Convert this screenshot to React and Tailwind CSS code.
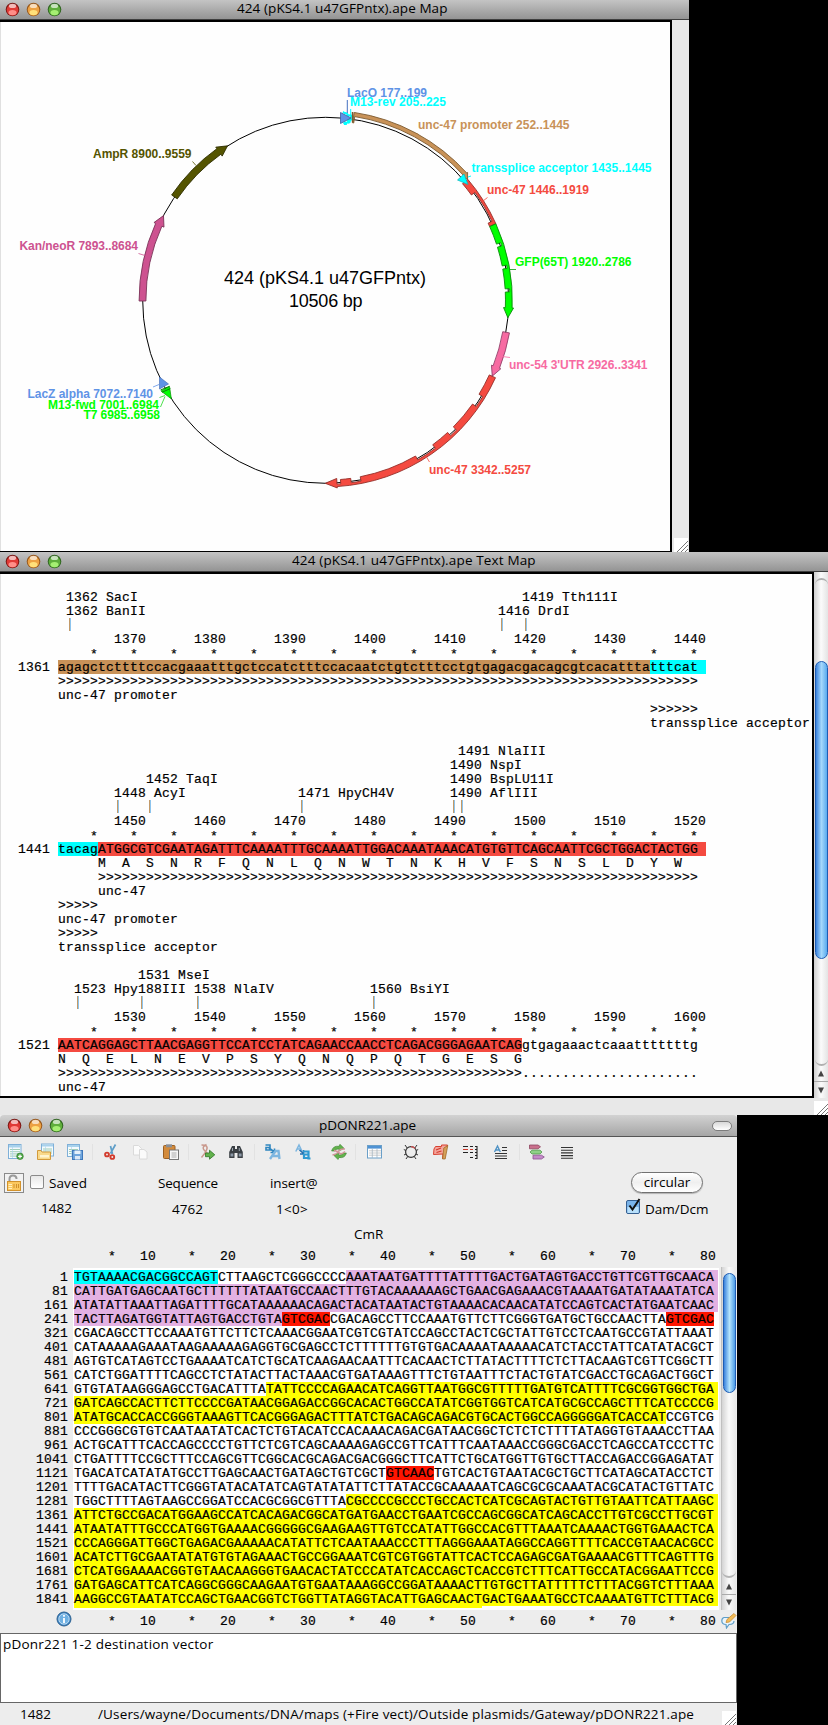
import React from "react";

const MONO = "font-['Liberation_Mono',monospace] text-[13px] leading-[16px] tracking-[0.199px] whitespace-pre [-webkit-text-stroke:0.2px]";

/* ---------- window chrome ---------- */

function Light({ dark, base, glow }) {
  return (
    <svg width="15" height="15" viewBox="0 0 15 15">
      <circle cx="7.5" cy="7.5" r="6.8" fill={dark} />
      <circle cx="7.5" cy="7.8" r="5.8" fill={base} />
      <ellipse cx="7.5" cy="10.6" rx="4" ry="2.6" fill={glow} />
      <ellipse cx="7.5" cy="3.9" rx="3.6" ry="2.2" fill="#fff" opacity="0.65" />
    </svg>
  );
}

function Lights() {
  return (
    <div className="flex gap-[6px] pb-px">
      <Light dark="#7a1714" base="#e03a36" glow="#ff8e88" />
      <Light dark="#96561a" base="#eda244" glow="#ffe07a" />
      <Light dark="#2f6420" base="#5fae3c" glow="#a5ef72" />
    </div>
  );
}

function Grip() {
  return (
    <svg width="14" height="14" viewBox="0 0 14 14" className="bg-white">
      <path d="M3 14 L14 3 M7 14 L14 7 M11 14 L14 11" stroke="#777" strokeWidth="1" fill="none" />
    </svg>
  );
}

function Arrow({ up }) {
  return (
    <svg width="8" height="7" viewBox="0 0 8 7">
      <path d={up ? "M4 0.5 L7 6.5 H1 Z" : "M1 0.5 H7 L4 6.5 Z"} fill="#444" />
    </svg>
  );
}

/* ---------- circular map ---------- */

const CX = 325.7;
const CY = 300.3;
const R = 183;
const TOTAL = 10506;

function pt(pos, r) {
  const a = (pos / TOTAL) * Math.PI * 2;
  return [CX + r * Math.sin(a), CY - r * Math.cos(a)];
}
const f = (p) => p[0].toFixed(2) + " " + p[1].toFixed(2);

// Closed band made of [start, end, innerRadius] pieces sharing one outer radius, with an optional head.
function band(pieces, outer, head) {
  const start = pieces[0][0];
  const end = pieces[pieces.length - 1][1];
  let d = "M" + f(pt(start, outer)) + " A" + outer + " " + outer + " 0 0 1 " + f(pt(end, outer));
  if (head) {
    d += " L" + f(pt(end, head.out)) + " L" + f(pt(head.tip, head.mid)) + " L" + f(pt(end, head.inn));
  }
  for (let i = pieces.length - 1; i >= 0; i--) {
    const [s, e, r] = pieces[i];
    d += " L" + f(pt(e, r)) + " A" + r + " " + r + " 0 0 0 " + f(pt(s, r));
  }
  return d + " Z";
}

const IN = 179.8;
const OUT = 186.6;
const THIN = 184.2;

const FEATURES = [
  { fill: "#c89258", stroke: "#7d5a30", d: band([[252, 262, 179.5], [262, 1400, 186]], 190, { out: 191, inn: 184, mid: 186.5, tip: 1445 }) },
  { fill: "#f44a40", stroke: "#94302a", d: band([[1446, 1580, IN], [1580, 1885, THIN], [1885, 1919, IN]], OUT) },
  { fill: "#00ff00", stroke: "#0a8a0a", d: band([[1920, 2095, IN], [2095, 2125, THIN], [2125, 2305, IN], [2305, 2335, THIN], [2335, 2520, IN], [2520, 2550, THIN], [2550, 2695, IN]], OUT, { out: 188, inn: 178, mid: 183, tip: 2786 }) },
  { fill: "#f44a40", stroke: "#94302a", d: band([[3342, 3546, IN], [3546, 3655, THIN], [3655, 3933, IN], [3933, 4007, THIN], [4007, 4187, IN], [4187, 4378, THIN], [4378, 4930, IN], [4930, 5020, THIN], [5020, 5116, IN], [5116, 5150, THIN]], OUT, { out: 188, inn: 178.5, mid: 183, tip: 5257 }) },
  { fill: "#f76ba2", stroke: "#93416a", d: band([[2920, 3250, IN]], OUT, { out: 188, inn: 178, mid: 183, tip: 3341 }) },
  { fill: "#cd5290", stroke: "#7b3358", d: band([[7873, 8590, IN]], OUT, { out: 188.5, inn: 177.5, mid: 183, tip: 8684 }) },
  { fill: "#545400", stroke: "#2e2e00", d: band([[8882, 9465, IN]], OUT, { out: 188.5, inn: 177.5, mid: 183, tip: 9559 }) },
];

const LABELS = [
  ["M13-rev 205..225", 350, 106, 96, "#00ffff"],
  ["LacO 177..199", 347, 97, 80, "#5f93e6"],
  ["unc-47 promoter 252..1445", 418, 129, 151.5, "#c89258"],
  ["transsplice acceptor 1435..1445", 471.5, 172, 180, "#00ffff"],
  ["unc-47 1446..1919", 487, 194, 102, "#f44a40"],
  ["GFP(65T) 1920..2786", 515, 266, 116.5, "#00ff00"],
  ["unc-54 3'UTR 2926..3341", 509, 369, 138.5, "#f76ba2"],
  ["unc-47 3342..5257", 429, 474, 102, "#f44a40"],
  ["AmpR 8900..9559", 93, 158, 98.5, "#545400"],
  ["Kan/neoR 7893..8684", 19.5, 250, 118.5, "#cd5290"],
  ["LacZ alpha 7072..7140", 27.5, 398, 125.5, "#5f93e6"],
  ["M13-fwd 7001..6984", 48, 409, 111, "#00ff00"],
  ["T7 6985..6958", 83.5, 419, 76.5, "#00ff00"],
];

function PlasmidMap() {
  return (
    <svg width="669" height="529" viewBox="1 22 669 529" className="block font-['Liberation_Sans',Arial,sans-serif]">
      <circle cx={CX} cy={CY} r={R} fill="none" stroke="#000" strokeWidth="1" />
      {FEATURES.map((x, i) => (
        <path key={i} d={x.d} fill={x.fill} stroke={x.stroke} strokeWidth="0.9" strokeLinejoin="round" />
      ))}
      <path d="M343 112 L352 118 L343 124 L347 124 L352 120 L352 116 Z" fill="#00ffff" stroke="#00ffff" strokeWidth="2" strokeDasharray="3 1.5" />
      <path d="M340.5 112.5 L351 118 L340.5 123.5 Z" fill="#5f93e6" stroke="#3c5f9c" strokeWidth="0.8" />
      <path d="M347.3 100 V113" stroke="#4470c0" fill="none" />
      <path d="M350.7 109 V117" stroke="#00ffff" fill="none" />
      <path d="M352.6 112 V122.5" stroke="#7d5a30" strokeWidth="1.6" />
      <path d="M457.5 180 L464 174 L468 184.5 Z" fill="#00ffff" stroke="#10b0b8" strokeWidth="0.7" />
      <path d="M468 177 L471 176" stroke="#00ffff" />
      <path d="M159.5 377 L168.5 384 L159.5 389 Z" fill="#5f93e6" stroke="#3c66b0" strokeWidth="0.6" />
      <path d="M161 391 L169.5 386.5 L171.3 398.8 Z" fill="#00ff00" stroke="#0a9a0a" strokeWidth="0.8" />
      <path d="M160.5 390 L169.5 386.3 M162 392.3 L170.3 388.6" stroke="#0a800a" strokeWidth="1" />
      <path d="M153 387 L159 384.5" stroke="#5f93e6" strokeWidth="0.8" />
      <path d="M159.5 397.5 L165 395.5 M160.5 407 L165 396.5" stroke="#20d820" strokeWidth="0.8" />
      <path d="M192.5 161.5 L196 165.5" stroke="#545400" strokeWidth="0.8" />
      <path d="M138.5 253.5 L145 255.5" stroke="#cd5290" strokeWidth="0.8" />
      <path d="M487.5 197.5 L483 201" stroke="#f44a40" strokeWidth="0.8" />
      <path d="M510 269.5 H516" stroke="#0a9a0a" strokeWidth="0.8" />
      <path d="M502.5 356.5 L510 357.5" stroke="#f76ba2" strokeWidth="0.8" />
      <path d="M426.5 457 L429.5 462" stroke="#f44a40" strokeWidth="0.8" />
      <path d="M415 136.5 L418 133" stroke="#c89258" strokeWidth="0.8" />
      {LABELS.map(([t, x, y, w, c]) => (
        <text key={t} x={x} y={y} textLength={w} fill={c} fontSize="12" fontWeight="700">{t}</text>
      ))}
      <text x="224" y="284" textLength="202" fontSize="18">424 (pKS4.1 u47GFPntx)</text>
      <text x="289" y="307" textLength="73.5" fontSize="18">10506 bp</text>
    </svg>
  );
}

/* ---------- text map ---------- */

// Lays strings out at character columns.
function place(items) {
  let s = "";
  for (const [col, t] of items) s = s.padEnd(col) + t;
  return s;
}
const ruler = (from) => place([0, 1, 2, 3, 4, 5, 6, 7].map((i) => [14 + i * 10, String(from + i * 10)]));
const STARS = place(Array.from({ length: 16 }, (_, i) => [11 + i * 5, "*"]));
const aminos = (col, s) => " ".repeat(col) + s.split("").join("  ");
const at = (col, t) => place([[col, t]]);

function Line({ children }) {
  return <div className="h-[14px]">{children}</div>;
}
function Stars() {
  return <div className="h-[14px] leading-[18px]">{STARS}</div>;
}
function Ticks({ cols }) {
  const cells = [];
  let c = 0;
  for (const col of cols) {
    cells.push(<span key={"s" + col}>{" ".repeat(col - c)}</span>);
    cells.push(<span key={col} className="mx-[3px] h-[13px] w-[2px] border-l border-r border-l-[#c39a68] border-r-[#8cc4ee]" />);
    c = col + 1;
  }
  return <div className="flex h-[14px]">{cells}</div>;
}
function Hl({ c, children }) {
  return <span className={"inline-block h-[14px] align-top " + c}>{children}</span>;
}

function TextMap() {
  return (
    <div className={MONO + " h-[522px] w-[811px] overflow-hidden bg-[#fefefe] pt-[16px] pl-px text-black"}>
      <Line>{place([[8, "1362 SacI"], [65, "1419 Tth111I"]])}</Line>
      <Line>{place([[8, "1362 BanII"], [62, "1416 DrdI"]])}</Line>
      <Ticks cols={[8, 62, 65]} />
      <Line>{ruler(1370)}</Line>
      <Stars />
      <Line>{"  1361 "}<Hl c="bg-[#c89258]">agagctcttttccacgaaatttgctccatctttccacaatctgtctttcctgtgagacgacagcgtcacattta</Hl><Hl c="bg-[#00ffff]">{"tttcat "}</Hl></Line>
      <Line>{at(7, ">".repeat(80))}</Line>
      <Line>{at(7, "unc-47 promoter")}</Line>
      <Line>{at(81, ">>>>>>")}</Line>
      <Line>{at(81, "transsplice acceptor")}</Line>
      <Line />
      <Line>{at(57, "1491 NlaIII")}</Line>
      <Line>{at(56, "1490 NspI")}</Line>
      <Line>{place([[18, "1452 TaqI"], [56, "1490 BspLU11I"]])}</Line>
      <Line>{place([[14, "1448 AcyI"], [37, "1471 HpyCH4V"], [56, "1490 AflIII"]])}</Line>
      <Ticks cols={[14, 18, 37, 56, 57]} />
      <Line>{ruler(1450)}</Line>
      <Stars />
      <Line>{"  1441 "}<Hl c="bg-[#00ffff]">tacag</Hl><Hl c="bg-[#f44a40]">{"ATGGCGTCGAATAGATTTCAAAATTTGCAAAATTGGACAAATAAACATGTGTTCAGCAATTCGCTGGACTACTGG "}</Hl></Line>
      <Line>{aminos(12, "MASNRFQNLQNWTNKHVFSNSLDYW")}</Line>
      <Line>{at(12, ">".repeat(75))}</Line>
      <Line>{at(12, "unc-47")}</Line>
      <Line>{at(7, ">>>>>")}</Line>
      <Line>{at(7, "unc-47 promoter")}</Line>
      <Line>{at(7, ">>>>>")}</Line>
      <Line>{at(7, "transsplice acceptor")}</Line>
      <Line />
      <Line>{at(17, "1531 MseI")}</Line>
      <Line>{place([[9, "1523 Hpy188III"], [24, "1538 NlaIV"], [46, "1560 BsiYI"]])}</Line>
      <Ticks cols={[9, 17, 24, 46]} />
      <Line>{ruler(1530)}</Line>
      <Stars />
      <Line>{"  1521 "}<Hl c="bg-[#f44a40]">AATCAGGAGCTTAACGAGGTTCCATCCTATCAGAACCAACCTCAGACGGGAGAATCAG</Hl>gtgagaaactcaaatttttttg</Line>
      <Line>{aminos(7, "NQELNEVPSYQNQPQTGESG")}</Line>
      <Line>{at(7, ">".repeat(58) + ".".repeat(22))}</Line>
      <Line>{at(7, "unc-47")}</Line>
    </div>
  );
}

/* ---------- sequence editor ---------- */

const C = "bg-[#00ffff]";
const V = "bg-[#e3b1e3]";
const X = "bg-[#ff1500]";
const Y = "bg-[#ffff00]";
const N = "";

// Each row: the bases, then [length, highlight] runs.
const ROWS = [
  ["TGTAAAACGACGGCCAGTCTTAAGCTCGGGCCCCAAATAATGATTTTATTTTGACTGATAGTGACCTGTTCGTTGCAACA", [18, C], [16, N], [46, V]],
  ["CATTGATGAGCAATGCTTTTTTATAATGCCAACTTTGTACAAAAAAGCTGAACGAGAAACGTAAAATGATATAAATATCA", [80, V]],
  ["ATATATTAAATTAGATTTTGCATAAAAAACAGACTACATAATACTGTAAAACACAACATATCCAGTCACTATGAATCAAC", [80, V]],
  ["TACTTAGATGGTATTAGTGACCTGTAGTCGACCGACAGCCTTCCAAATGTTCTTCGGGTGATGCTGCCAACTTAGTCGAC", [26, V], [6, X], [42, N], [6, X]],
  ["CGACAGCCTTCCAAATGTTCTTCTCAAACGGAATCGTCGTATCCAGCCTACTCGCTATTGTCCTCAATGCCGTATTAAAT", [80, N]],
  ["CATAAAAAGAAATAAGAAAAAGAGGTGCGAGCCTCTTTTTTGTGTGACAAAATAAAAACATCTACCTATTCATATACGCT", [80, N]],
  ["AGTGTCATAGTCCTGAAAATCATCTGCATCAAGAACAATTTCACAACTCTTATACTTTTCTCTTACAAGTCGTTCGGCTT", [80, N]],
  ["CATCTGGATTTTCAGCCTCTATACTTACTAAACGTGATAAAGTTTCTGTAATTTCTACTGTATCGACCTGCAGACTGGCT", [80, N]],
  ["GTGTATAAGGGAGCCTGACATTTATATTCCCCAGAACATCAGGTTAATGGCGTTTTTGATGTCATTTTCGCGGTGGCTGA", [24, N], [56, Y]],
  ["GATCAGCCACTTCTTCCCCGATAACGGAGACCGGCACACTGGCCATATCGGTGGTCATCATGCGCCAGCTTTCATCCCCG", [80, Y]],
  ["ATATGCACCACCGGGTAAAGTTCACGGGAGACTTTATCTGACAGCAGACGTGCACTGGCCAGGGGGATCACCATCCGTCG", [74, Y], [6, N]],
  ["CCCGGGCGTGTCAATAATATCACTCTGTACATCCACAAACAGACGATAACGGCTCTCTCTTTTATAGGTGTAAACCTTAA", [80, N]],
  ["ACTGCATTTCACCAGCCCCTGTTCTCGTCAGCAAAAGAGCCGTTCATTTCAATAAACCGGGCGACCTCAGCCATCCCTTC", [80, N]],
  ["CTGATTTTCCGCTTTCCAGCGTTCGGCACGCAGACGACGGGCTTCATTCTGCATGGTTGTGCTTACCAGACCGGAGATAT", [80, N]],
  ["TGACATCATATATGCCTTGAGCAACTGATAGCTGTCGCTGTCAACTGTCACTGTAATACGCTGCTTCATAGCATACCTCT", [39, N], [6, X], [35, N]],
  ["TTTTGACATACTTCGGGTATACATATCAGTATATATTCTTATACCGCAAAAATCAGCGCGCAAATACGCATACTGTTATC", [80, N]],
  ["TGGCTTTTAGTAAGCCGGATCCACGCGGCGTTTACGCCCCGCCCTGCCACTCATCGCAGTACTGTTGTAATTCATTAAGC", [34, N], [46, Y]],
  ["ATTCTGCCGACATGGAAGCCATCACAGACGGCATGATGAACCTGAATCGCCAGCGGCATCAGCACCTTGTCGCCTTGCGT", [80, Y]],
  ["ATAATATTTGCCCATGGTGAAAACGGGGGCGAAGAAGTTGTCCATATTGGCCACGTTTAAATCAAAACTGGTGAAACTCA", [80, Y]],
  ["CCCAGGGATTGGCTGAGACGAAAAACATATTCTCAATAAACCCTTTAGGGAAATAGGCCAGGTTTTCACCGTAACACGCC", [80, Y]],
  ["ACATCTTGCGAATATATGTGTAGAAACTGCCGGAAATCGTCGTGGTATTCACTCCAGAGCGATGAAAACGTTTCAGTTTG", [80, Y]],
  ["CTCATGGAAAACGGTGTAACAAGGGTGAACACTATCCCATATCACCAGCTCACCGTCTTTCATTGCCATACGGAATTCCG", [80, Y]],
  ["GATGAGCATTCATCAGGCGGGCAAGAATGTGAATAAAGGCCGGATAAAACTTGTGCTTATTTTTCTTTACGGTCTTTAAA", [80, Y]],
  ["AAGGCCGTAATATCCAGCTGAACGGTCTGGTTATAGGTACATTGAGCAACTGACTGAAATGCCTCAAAATGTTCTTTACG", [80, Y]],
];

const RULER = place([1, 2, 3, 4, 5, 6, 7, 8].flatMap((i) => [[i * 10 - 6, "*"], [i * 10 - 2, String(i * 10)]]));

function SeqRow({ row }) {
  const [seq, ...runs] = row;
  let p = 0;
  return (
    <div className="flex h-[14px] w-[644px]">
      {runs.map(([n, c], i) => {
        const s = seq.slice(p, p + n);
        p += n;
        const grow = i === runs.length - 1 && (c === V || c === Y) ? " grow" : "";
        return <span key={i} className={c + grow}>{s}</span>;
      })}
    </div>
  );
}

function Sheet({ x = 0, y = 0, c = "#7fb0d8" }) {
  return (
    <g>
      <rect x={x + 0.5} y={y + 0.5} width="12" height="12" fill="#f4fafd" stroke={c} />
      <rect x={x + 1} y={y + 1} width="11" height="2" fill="#a9d2ec" />
      <path d={`M${x + 2} ${y + 5.5} h9 M${x + 2} ${y + 7.5} h9 M${x + 2} ${y + 9.5} h9`} stroke="#8cc2a4" strokeWidth="0.8" />
      <path d={`M${x + 4.5} ${y + 3} v9`} stroke="#a9d2ec" strokeWidth="0.6" />
    </g>
  );
}

const ICONS = [
  ["ml-[8px]", <g><rect x="0.5" y="0.5" width="12.5" height="14" fill="#f4fafd" stroke="#7fb0d8" /><rect x="1" y="1" width="11.5" height="2.5" fill="#a9d2ec" /><path d="M2 5.5 H12 M2 7.7 H12 M2 9.9 H12 M2 12.1 H12" stroke="#8cc2a4" strokeWidth="0.8" /><path d="M4.5 3 V14" stroke="#a9d2ec" strokeWidth="0.6" /><circle cx="12" cy="12.3" r="3.3" fill="#4fa648" stroke="#2f7c2c" strokeWidth="0.6" /><path d="M12 10.4 V14.2 M10.1 12.3 H13.9" stroke="#fff" strokeWidth="1.2" /></g>],
  ["ml-[13px]", <g><Sheet x={4} y={-0.5} /><path d="M0.5 15.5 V6.5 H4 L5 8 H13.5 V15.5 Z" fill="#f9d98a" stroke="#d29a3c" /><path d="M3 11 H12 V13.5 H3 Z" fill="#fff4cf" /></g>],
  ["ml-[14px]", <g><Sheet /><rect x="5.5" y="6.5" width="10" height="9" fill="#6fa5dc" stroke="#3f78bb" /><rect x="7.5" y="6.5" width="6" height="3.5" fill="#e6f1fb" /><rect x="8" y="12" width="5" height="3.5" fill="#dce9f7" /></g>],
  ["sep", "ml-[9px]", "ml-[10px]"],
  ["", <g fill="none"><path d="M12.5 0.5 L7.5 9.5 M7.5 2 L9.5 10" stroke="#5f9ec8" strokeWidth="1.7" /><circle cx="4" cy="10.5" r="1.9" stroke="#d23a2c" strokeWidth="1.9" /><circle cx="9.3" cy="13" r="1.9" stroke="#d23a2c" strokeWidth="1.9" /></g>],
  ["ml-[14px]", <g fill="#fbfbfb" stroke="#dadada"><path d="M0.5 1.5 H5.5 L8.5 4.5 V11 H0.5 Z" /><path d="M6.5 5.5 H11 L14 8 V15 H6.5 Z" /></g>],
  ["ml-[14px]", <g><rect x="0.5" y="1.5" width="11.5" height="13" rx="1" fill="#d38b3c" stroke="#9a5f22" /><rect x="3" y="0.3" width="6" height="3" fill="#8a8f96" /><rect x="6.5" y="6" width="9" height="9.5" fill="#f6f6f6" stroke="#777" /><path d="M8.5 9 H13.5 M8.5 11 H13.5 M8.5 13 H13.5" stroke="#9a9a9a" strokeWidth="0.8" /></g>],
  ["sep", "ml-[9px]", "ml-[11px]"],
  ["", <g><path d="M1.5 1 Q9 1 6.5 6 Q5 10 1.5 13.5 M6.5 0.5 Q1 3 4.5 6.5 L8 10" fill="none" stroke="#c9988c" strokeWidth="1.5" /><path d="M5.5 9 H9.5 V6.2 L14.8 10.8 L9.5 15.2 V12.7 H5.5 Z" fill="#62b24c" stroke="#2d7426" strokeWidth="0.8" /></g>],
  ["ml-[13px]", <g fill="#3a3f44"><path d="M3 2 H6 V5 H8 V2 H11 L13.8 8 V14 H8.5 V9 H5.5 V14 H0.2 V8 Z" /><path d="M1.5 9.5 H4.3 V12.4 H1.5 Z M9.8 9.5 H12.6 V12.4 H9.8 Z" fill="#8b98a6" /><path d="M3.5 4 V7 M10.3 4 V7" stroke="#9aa4ae" /></g>],
  ["sep", "ml-[9px]", "ml-[10px]"],
  ["", <g fill="none"><path d="M0.5 1 H5 V6 H1 V3.5 H5 M4 4 L9.5 8 M9.5 4.5 V8.5 H5.5" stroke="#2f86c0" strokeWidth="1.6" /><path d="M5 15 L10.5 7 H13.5 L14.5 15 M8 12 H14" stroke="#7db6e0" strokeWidth="2.4" /></g>],
  ["ml-[14px]", <g fill="none"><path d="M0.8 7.5 L4 1 L6.8 7 M2 5 H6" stroke="#7db6e0" strokeWidth="1.6" /><path d="M4.5 6 L8.5 9.5 M8.5 6 V10 H5" stroke="#256fae" strokeWidth="1.6" /><path d="M8 7.5 H13.5 V14.5 H15.5 M13.5 10.5 H9 V14 H13.5" stroke="#2f9ad2" strokeWidth="2.2" /></g>],
  ["ml-[20px]", <g><path d="M0.6 7 Q2 1.5 8 2.3 L9 0.3 L13 4.3 L8 7 L8 5 Q5 4.5 4 7 Z" fill="#62b24c" stroke="#3b8230" strokeWidth="0.6" /><path d="M15.4 9 Q14 14.5 8 13.5 L7 15.5 L3 11.5 L7.5 9 L7.6 11 Q11 11.5 12 9 Z" fill="#62b24c" stroke="#3b8230" strokeWidth="0.6" /><path d="M1.5 11 Q6 10 7.5 7.5 Q9 4.5 14 5 M3 6.5 Q7 7 9 9.5 Q11 10.5 14 7.5" stroke="#d3949a" strokeWidth="1.4" fill="none" /></g>],
  ["sep", "ml-[8px]", "ml-[11px]"],
  ["", <g><rect x="0.5" y="1.5" width="14" height="12.5" fill="#fff" stroke="#6a9fc8" /><rect x="1" y="2" width="13" height="2.6" fill="#4f92d4" /><path d="M5.3 4.5 V14 M10 4.5 V14" stroke="#9fb6c8" strokeWidth="0.8" /><path d="M2 6.8 H14 M2 9 H14 M2 11.2 H14" stroke="#b5b5b5" strokeWidth="0.7" /></g>],
  ["ml-[20px]", <g fill="none" stroke="#333"><circle cx="8" cy="8" r="5.4" strokeWidth="1.2" /><path d="M2 1 L4.2 4 M14 1 L11.8 4 M0.8 5.5 L2.8 6.5 M15.2 5.5 L13.2 6.5 M1 11 L3 10 M15 11 L13 10 M3 15 L4.8 12.4 M13 15 L11.2 12.4" strokeWidth="1" /><path d="M8 2.6 A5.4 5.4 0 0 1 12 4.4" stroke="#d05050" strokeWidth="1.3" /></g>],
  ["ml-[14px]", <g><path d="M2.5 2.5 H8.5 V1 H14.5 L13.5 4 L12.5 4.5 L11.5 14.5 L9.5 14.5 L10 10 L0.5 10.5 L1 5 Z" fill="#f4a59c" stroke="#d8402f" strokeWidth="1" /><path d="M10.8 4 L14.8 1.5 L12.2 15 H9.6 Z" fill="#d6a059" stroke="#9a6420" strokeWidth="0.7" /><path d="M3 6 L8 4 M3.5 8.5 L8.5 7" stroke="#d23a2c" strokeWidth="1.1" /></g>],
  ["ml-[14px]", <g fill="none" strokeWidth="1.1"><path d="M0 2.5 H5 M0 8.5 H5 M7 2.5 H10 M7 8.5 H10 M7 13.5 H10" stroke="#222" /><path d="M0 5.5 H5 M7 5.5 H10" stroke="#d23a2c" /><path d="M14 2 V15 M12 2.5 H14 M12 5.5 H14 M12 8.5 H14 M12 11.5 H14 M12 14.5 H14" stroke="#222" /></g>],
  ["ml-[15px]", <g><path d="M0.5 8 L3.5 2 L6.3 8 M1.5 6 H5.5" stroke="#4f92c4" strokeWidth="1.4" fill="none" /><path d="M8 3.5 H13 M8 6.5 H13 M1 9.5 H13 M1 12 H13 M1 14.5 H13" stroke="#333" strokeWidth="1.1" /></g>],
  ["sep", "ml-[9px]", "ml-[9px]"],
  ["", <g strokeWidth="0.8"><path d="M0.5 1 H9 L11.5 2.8 L9 4.8 H0.5 Z" fill="#c9708c" stroke="#8e4560" /><path d="M3 6.2 H11 L13 8 L11 10 H3 L1 8 Z" fill="#8fd088" stroke="#4e9a48" /><path d="M4 11.2 H12.5 L15.3 13 L12.5 15 H4 Z" fill="#c48ac8" stroke="#8a5290" /></g>],
  ["ml-[15px]", <path d="M1 3.5 H13 M1 6.2 H13 M1 8.9 H13 M1 11.6 H13 M1 14.3 H13" stroke="#333" strokeWidth="1.1" />],
];

function Toolbar() {
  return (
    <div className="flex h-[33px] items-center pb-[3px]">
      {ICONS.map((it, i) =>
        it[0] === "sep" ? (
          <div key={i} className={"flex " + it[1]}>
            <div className="h-4 w-px bg-[#e2e2e2]" />
            <div className={it[2]} />
          </div>
        ) : (
          <svg key={i} width="16" height="16" viewBox="0 0 16 16" className={"shrink-0 overflow-visible " + it[0]}>{it[1]}</svg>
        )
      )}
    </div>
  );
}

function Editor() {
  return (
    <div className="flex h-[610px] w-[737px] flex-col bg-[#ededed] text-[13.5px] leading-4 text-black">
      <div className="grid h-[22px] shrink-0 grid-cols-[319px_1fr_51px] items-center rounded-t-[4px] border-b border-[#555] bg-linear-to-b from-[#d2d2d2] to-[#a6a6a6]">
        <div className="pl-[7px]"><Lights /></div>
        <div className="pb-px"><span>pDONR221.ape</span></div>
        <div className="ml-[26px] h-[10px] w-[20px] rounded-full border border-[#7c7c7c] bg-linear-to-b from-[#d8d8d8] to-white" />
      </div>
      <Toolbar />
      <div className="flex h-[25px] items-center">
        <div className="ml-[4px] flex size-[20px] items-center justify-center border border-[#8a8a8a] bg-[#f2f2f2]">
          <svg width="16" height="18" viewBox="0 0 16 18">
            <path d="M3.5 8 V5 Q3.5 1.5 7 1.5 Q10.5 1.5 10.5 5" fill="none" stroke="#9a9a9a" strokeWidth="2" />
            <rect x="1.5" y="7.5" width="13" height="9" fill="#fbc860" stroke="#d2922c" />
            <path d="M2.5 10.5 H6 M2.5 12.5 H6 M2.5 14.5 H6" stroke="#fff0c0" />
            <path d="M8 10 V14 M10.5 10 V14 M12.5 10 V14" stroke="#d2922c" />
          </svg>
        </div>
        <div className="mb-[2px] ml-[6px] size-[14px] rounded-[2px] border border-[#8a8a8a] bg-linear-to-b from-[#e8e8e8] to-white" />
        <span className="ml-[5px] w-[109px] tracking-[0.1px]">Saved</span>
        <span className="w-[112px] tracking-[-0.2px]">Sequence</span>
        <span className="w-[361px] tracking-[-0.1px]">insert@</span>
        <div className="flex h-[21px] w-[72px] items-center justify-center rounded-full border border-[#727272] bg-linear-to-b from-white via-[#efefef] to-white pb-[2px] shadow-[0_1px_1px_rgba(0,0,0,0.25)]">circular</div>
      </div>
      <div className="flex h-[26px] items-center">
        <span className="ml-[41px] w-[131px]">1482</span>
        <span className="w-[104px] pt-[2px]">4762</span>
        <span className="w-[349px] pt-[2px] tracking-[0.3px]">1&lt;0&gt;</span>
        <svg width="16" height="17" viewBox="0 0 16 17" className="mt-[-4px]">
          <rect x="1.5" y="2.5" width="13" height="13" rx="1.5" fill="#7ab4ea" stroke="#355f90" />
          <rect x="2.5" y="9" width="11" height="6" fill="#b8e0fb" />
          <path d="M4.5 7.5 L7.5 11.5 L14.5 1" fill="none" stroke="#111" strokeWidth="2" />
        </svg>
        <span className="ml-[4px] pt-px">Dam/Dcm</span>
      </div>
      <div className="flex h-[27px] items-center pb-[2px] pl-[354px]">CmR</div>
      <div className={MONO + " flex h-[19px] items-center pb-[2px] pl-[76px]"}>{RULER}</div>
      <div className="flex h-[343px] shrink-0">
        <div className={MONO + " w-[69px] pt-[3px] pr-[1px] text-right"}>
          {ROWS.map((_, i) => <div key={i} className="h-[14px]">{i * 80 + 1}</div>)}
        </div>
        <div className={MONO + " mt-px ml-[4px] w-[646px] bg-white pt-[2px] pl-px"}>
          {ROWS.map((r, i) => <SeqRow key={i} row={r} />)}
          <div className="h-[2px] w-[408px] bg-[#ffff00]" />
        </div>
        <div className="ml-[2px] flex w-[15px] flex-col items-center border-l border-[#c0c0c0] bg-linear-to-r from-[#d4d4d4] via-[#fafafa] to-[#e8e8e8]">
          <div className="mt-[6px] h-[120px] w-[13px] rounded-full border border-[#1d5cb4] bg-linear-to-r from-[#3a82dc] via-[#b4e4fd] to-[#4a9ae6]" />
          <div className="h-[185px] w-[14px] rounded-b-full border-b-2 border-[#b5b5b5]" />
          <div className="flex h-[16px] items-center"><Arrow up /></div>
          <div className="flex h-[16px] w-full items-center justify-center border-t border-[#aaa]"><Arrow /></div>
        </div>
      </div>
      <div className="flex h-[23px] shrink-0 items-center">
        <svg width="16" height="16" viewBox="0 0 16 16" className="mt-[-5px] ml-[56px]">
          <circle cx="8" cy="8" r="7" fill="#3f86c4" stroke="#2c6090" />
          <circle cx="8" cy="8" r="5.2" fill="#6fb0e2" stroke="#d4e9f8" strokeWidth="0.8" />
          <path d="M8 7 V12 M8 4 V5.8" stroke="#fff" strokeWidth="1.8" />
        </svg>
        <span className={MONO + " ml-[4px] w-[645px] pt-px"}>{RULER}</span>
        <svg width="16" height="16" viewBox="0 0 16 16" className="mt-[-1px]">
          <path d="M8 4.5 H3 Q0.8 5 0.8 8 Q1 11.5 5 11.5 L5.5 15 L8 11.5 Q13 11.5 13 8" fill="#e8f4fc" stroke="#5f9ec8" strokeWidth="1.2" />
          <path d="M5 9.5 L6 6.5 L13 0.5 L15 2.5 L8.5 9 Z" fill="#f3bd58" stroke="#c88a30" strokeWidth="0.8" />
        </svg>
      </div>
      <div className="h-[70px] shrink-0 border border-[#666] bg-white px-[2px] pt-[2px]">
        <span className="tracking-[0.22px]">pDonr221 1-2 destination vector</span>
      </div>
      <div className="flex h-[22px] items-center">
        <span className="ml-[20px] w-[78px]">1482</span>
        <span className="w-[624px] tracking-[0.15px] whitespace-nowrap">/Users/wayne/Documents/DNA/maps (+Fire vect)/Outside plasmids/Gateway/pDONR221.ape</span>
        <div className="self-end"><Grip /></div>
      </div>
    </div>
  );
}

export default function App() {
  return (
    <div className="flex h-[1725px] w-[828px] flex-col overflow-hidden bg-black font-['Open_Sans','Noto_Sans',sans-serif] text-[13.5px] leading-4 text-black">
      <div className="h-[552px] w-[689px] shrink-0 bg-[#e8e8e8]">
        <div className="flex h-[20px] items-center border-b border-[#3f3f3f] bg-linear-to-b from-[#c4c4c4] to-[#949494] pl-[5px]">
          <div className="w-[232px]"><Lights /></div>
          <span className="pb-[3px] tracking-[0.08px] whitespace-nowrap">424 (pKS4.1 u47GFPntx).ape Map</span>
        </div>
        <div className="flex h-[532px]">
          <div className="w-[672px] border-t-2 border-r-2 border-b border-black">
            <div className="h-[529px] border-l border-[#e0e0e0] bg-[#fefefe]"><PlasmidMap /></div>
          </div>
          <div className="ml-[2px] flex items-end"><Grip /></div>
        </div>
      </div>

      <div className="h-[563px] w-[828px] shrink-0 bg-[#e8e8e8]">
        <div className="flex h-[20px] items-center border-b border-[#3f3f3f] bg-linear-to-b from-[#c4c4c4] to-[#949494] pl-[5px]">
          <div className="w-[287px]"><Lights /></div>
          <span className="pb-[3px] tracking-[0.15px] whitespace-nowrap">424 (pKS4.1 u47GFPntx).ape Text Map</span>
        </div>
        <div className="flex h-[526px]">
          <div className="w-[814px] border-y-2 border-r-2 border-black">
            <div className="border-l border-[#e0e0e0]"><TextMap /></div>
          </div>
          <div className="flex w-[14px] flex-col items-center bg-linear-to-r from-[#d0d0d0] via-[#fbfbfb] to-[#e4e4e4]">
            <div className="mt-[6px] h-[83px] w-[13px] rounded-t-full border-t-2 border-[#b0b0b0]" />
            <div className="h-[298px] w-[13px] rounded-full border border-[#1d5cb4] bg-linear-to-r from-[#3a82dc] via-[#a4d8fb] to-[#58aaee]" />
            <div className="h-[107px] w-[13px] rounded-b-full border-b-2 border-[#b0b0b0]" />
            <div className="flex h-[15px] items-center"><Arrow up /></div>
            <div className="flex h-[17px] w-full items-center justify-center border-t border-[#aaa]"><Arrow /></div>
          </div>
        </div>
        <div className="flex h-[17px] items-end justify-end"><Grip /></div>
      </div>

      <Editor />
    </div>
  );
}
